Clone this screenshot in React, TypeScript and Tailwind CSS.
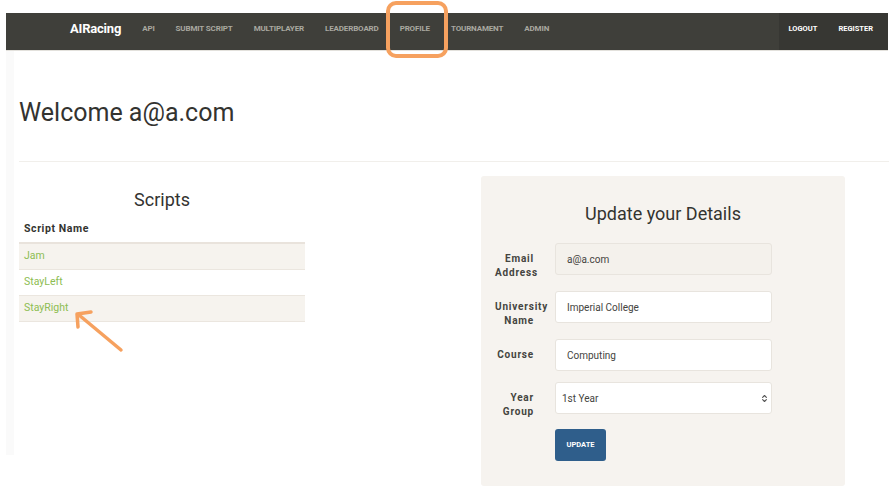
import { ChevronsUpDown } from "lucide-react";

const navLinks = ["API", "Submit Script", "Multiplayer", "Leaderboard", "Profile", "Tournament", "Admin"];
const scripts = ["Jam", "StayLeft", "StayRight"];

const fields = [
  { label: "Email Address", value: "a@a.com", disabled: true },
  { label: "University Name", value: "Imperial College" },
  { label: "Course", value: "Computing" },
];

export default function App() {
  return (
    <div className="relative w-[895px] h-[496px] bg-white overflow-hidden font-['Roboto','Liberation_Sans',sans-serif] pt-[13px]">
      {/* Navbar */}
      <nav className="mx-[6px] w-[882px] h-[38px] bg-[#3f3f3a] border-b border-[#e3e1dc] flex items-stretch">
        <div className="pl-[64px] pr-[10.5px] pb-[6px] flex items-center text-white font-bold text-[13px] tracking-[-0.2px]">AIRacing</div>
        <ul className="flex items-center pb-[6px]">
          {navLinks.map((l) => (
            <li key={l} className="px-[10.5px] text-[8px] font-bold uppercase text-[#a9a8a0] tracking-[-0.15px]">
              {l}
            </li>
          ))}
        </ul>
        <div className="ml-auto bg-[#373733] flex items-center pb-[6px] pl-[10px] pr-[15px] gap-[21px] text-white text-[7.5px] font-bold uppercase">
          <span>Logout</span>
          <span>Register</span>
        </div>
      </nav>

      {/* Body */}
      <div className="mx-[6px] border-l-[8px] border-[#fafafa] h-[404px]">
        <div className="pl-[5px]">
          <h1 className="pt-[47px] text-[25px] leading-[30px] text-[#333330]">Welcome a@a.com</h1>
          <hr className="mt-[33px] border-[#f1efeb]" />

          <div className="flex mt-[14px]">
            {/* Scripts */}
            <div className="w-[286px] pt-[13px]">
              <h2 className="text-center text-[18px] leading-[22px] text-[#333330]">Scripts</h2>
              <div className="mt-[5px] px-[5px] py-[5px] text-[10.5px] font-bold tracking-[0.6px] text-[#333330] border-b-2 border-[#e9e3dc]">Script Name</div>
              {scripts.map((s, i) => (
                <div
                  key={s}
                  className={`h-[26px] px-[5px] flex items-center text-[10.5px] text-[#8dbd52] border-b border-[#ebe6df] ${i % 2 === 0 ? "bg-[#f6f3ee]" : "bg-white"}`}
                >
                  {s}
                </div>
              ))}
            </div>

            {/* Update details */}
            <div className="ml-[176px] w-[364px] h-[310px] bg-[#f6f3ef] rounded-[3px] pt-[27px] pl-[14px]">
              <h2 className="text-center text-[18px] leading-[22px] text-[#333330] -ml-[14px]">Update your Details</h2>
              <div className="mt-[18px] flex flex-col gap-[16px]">
                {fields.map((f) => (
                  <div key={f.value} className="flex items-start h-[32px]">
                    <label className="w-[39px] pt-[9px] text-right text-[10px] leading-[14px] font-bold tracking-[0.8px] text-[#444440]">
                      {f.label}
                    </label>
                    <div
                      className={`ml-[21px] w-[217px] h-[32px] rounded-[3px] border border-[#e8e4de] flex items-center px-[11px] text-[10px] text-[#444440] ${f.disabled ? "bg-[#f4f1ec]" : "bg-white"}`}
                    >
                      {f.value}
                    </div>
                  </div>
                ))}
              </div>
              <div className="flex items-start h-[32px] mt-[11px]">
                <label className="w-[39px] pt-[9px] text-right text-[10px] leading-[14px] font-bold tracking-[0.8px] text-[#444440]">
                  Year Group
                </label>
                <div className="ml-[21px] w-[217px] h-[32px] rounded-[3px] border border-[#e8e4de] bg-white flex items-center pl-[6px] pr-[2px] text-[10px] text-[#444440]">
                  <span className="flex-1">1st Year</span>
                  <ChevronsUpDown className="w-[9px] h-[9px] text-[#555]" strokeWidth={3} />
                </div>
              </div>
              <button className="ml-[60px] mt-[15px] w-[51px] h-[32px] rounded-[3px] bg-[#2f5e8b] text-white text-[7.5px] font-bold uppercase">
                Update
              </button>
            </div>
          </div>
        </div>
      </div>

      {/* Annotation: highlight box */}
      <div className="absolute left-[386px] top-[1px] w-[62px] h-[57px] border-[4px] border-[#f6a15f] rounded-[10px]" />

      {/* Annotation: arrow */}
      <svg className="absolute left-[70px] top-[305px]" width="60" height="52" viewBox="0 0 60 52">
        <g stroke="#f6a15f" strokeWidth="3.5" strokeLinecap="round" fill="none">
          <line x1="51" y1="45" x2="9" y2="10" />
          <polyline points="8,22 7,9 21,7" strokeLinejoin="round" />
        </g>
      </svg>
    </div>
  );
}
